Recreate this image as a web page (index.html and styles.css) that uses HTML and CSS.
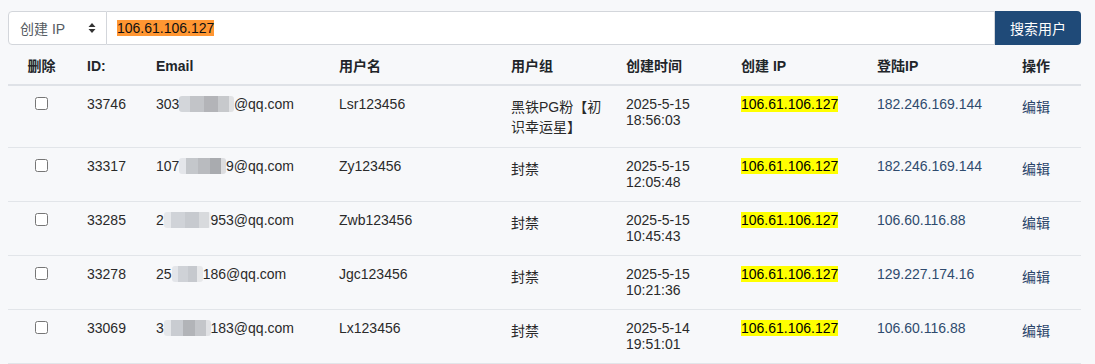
FILE: index.html
```html
<!DOCTYPE html>
<html lang="zh-CN">
<head>
  <meta charset="UTF-8">
  <title>用户管理</title>
  <link rel="stylesheet" href="styles.css">
</head>
<body>
  <div class="search-bar">
    <div class="search-select">
      <span>创建 IP</span>
      <svg class="arrows" width="8" height="12" viewBox="0 0 8 12">
        <path d="M4 1 L7.5 5 H0.5 Z M4 11 L0.5 7 H7.5 Z" fill="#333"/>
      </svg>
    </div>
    <div class="search-field"><span class="hit">106.61.106.127</span></div>
    <button class="search-button">搜索用户</button>
  </div>

  <table class="user-table">
    <colgroup>
      <col style="width:67px">
      <col style="width:69px">
      <col style="width:183px">
      <col style="width:172px">
      <col style="width:115px">
      <col style="width:115px">
      <col style="width:136px">
      <col style="width:145px">
      <col style="width:71px">
    </colgroup>
    <thead>
      <tr>
        <th class="center">删除</th>
        <th>ID:</th>
        <th>Email</th>
        <th>用户名</th>
        <th>用户组</th>
        <th>创建时间</th>
        <th>创建 IP</th>
        <th>登陆IP</th>
        <th>操作</th>
      </tr>
    </thead>
    <tbody>
      <tr>
        <td class="center"><input type="checkbox"></td>
        <td>33746</td>
        <td>303<span class="mask m1">0000000</span>@qq.com</td>
        <td>Lsr123456</td>
        <td>黑铁PG粉【初识幸运星】</td>
        <td>2025-5-15<br>18:56:03</td>
        <td><span class="ip-hit">106.61.106.127</span></td>
        <td class="login-ip">182.246.169.144</td>
        <td><a href="#" class="edit">编辑</a></td>
      </tr>
      <tr>
        <td class="center"><input type="checkbox"></td>
        <td>33317</td>
        <td>107<span class="mask m2">000000</span>9@qq.com</td>
        <td>Zy123456</td>
        <td>封禁</td>
        <td>2025-5-15<br>12:05:48</td>
        <td><span class="ip-hit">106.61.106.127</span></td>
        <td class="login-ip">182.246.169.144</td>
        <td><a href="#" class="edit">编辑</a></td>
      </tr>
      <tr>
        <td class="center"><input type="checkbox"></td>
        <td>33285</td>
        <td>2<span class="mask m3">000000</span>953@qq.com</td>
        <td>Zwb123456</td>
        <td>封禁</td>
        <td>2025-5-15<br>10:45:43</td>
        <td><span class="ip-hit">106.61.106.127</span></td>
        <td class="login-ip">106.60.116.88</td>
        <td><a href="#" class="edit">编辑</a></td>
      </tr>
      <tr>
        <td class="center"><input type="checkbox"></td>
        <td>33278</td>
        <td>25<span class="mask m4">0000</span>186@qq.com</td>
        <td>Jgc123456</td>
        <td>封禁</td>
        <td>2025-5-15<br>10:21:36</td>
        <td><span class="ip-hit">106.61.106.127</span></td>
        <td class="login-ip">129.227.174.16</td>
        <td><a href="#" class="edit">编辑</a></td>
      </tr>
      <tr>
        <td class="center"><input type="checkbox"></td>
        <td>33069</td>
        <td>3<span class="mask m5">000000</span>183@qq.com</td>
        <td>Lx123456</td>
        <td>封禁</td>
        <td>2025-5-14<br>19:51:01</td>
        <td><span class="ip-hit">106.61.106.127</span></td>
        <td class="login-ip">106.60.116.88</td>
        <td><a href="#" class="edit">编辑</a></td>
      </tr>
    </tbody>
  </table>
</body>
</html>
```

FILE: styles.css
```css
* {
  box-sizing: border-box;
}

body {
  margin: 0;
  padding: 11px 14px 0 8px;
  background-color: #f7f8fa;
  font-family: "Liberation Sans", Arial, "Noto Sans CJK SC", sans-serif;
  font-size: 14px;
  color: #212529;
}

/* Search bar */
.search-bar {
  display: flex;
  height: 34px;
}

.search-select {
  width: 99px;
  display: flex;
  align-items: center;
  justify-content: space-between;
  padding: 0 10px 0 11px;
  background-color: #fff;
  border: 1px solid #d3d6db;
  border-radius: 4px 0 0 4px;
  color: #555b62;
}

.arrows {
  display: block;
}

.search-field {
  flex: 1;
  display: flex;
  align-items: center;
  padding-left: 10px;
  background-color: #fff;
  border: 1px solid #d3d6db;
  border-left: none;
  color: #111;
}

.hit {
  background-color: #ff9632;
}

.search-button {
  width: 86px;
  border: none;
  border-radius: 0 4px 4px 0;
  background-color: #1f4a78;
  color: #fff;
  font-family: inherit;
  font-size: 14px;
  cursor: pointer;
}

/* Table */
.user-table {
  width: 100%;
  border-collapse: collapse;
  table-layout: fixed;
}

.user-table th,
.user-table td {
  padding: 10px 12px 11px;
  text-align: left;
  vertical-align: top;
}

.user-table th {
  font-weight: bold;
  padding-bottom: 9px;
  vertical-align: baseline;
  border-bottom: 2px solid #dfe2e7;
}

.user-table td {
  border-bottom: 1px solid #e2e5e9;
  color: #2a2a2a;
}

.user-table .center {
  text-align: center;
}

.user-table input[type="checkbox"] {
  margin: 1px 0 0;
  width: 13px;
  height: 13px;
}

.mask {
  color: transparent;
  border-radius: 3px;
}

.m1 {
  background: linear-gradient(to right, #d3d6da 0 20%, #c2c4c8 20% 45%, #b3b4b8 45% 70%, #c7c9cc 70% 90%, #e1e2e4 90%);
}

.m2 {
  background: linear-gradient(to right, #e4e6ea 0 15%, #c4c7cb 15% 40%, #b9bbbf 40% 65%, #a9abaf 65% 90%, #dcdde0 90%);
}

.m3 {
  background: linear-gradient(to right, #e6e8eb 0 15%, #d0d3d8 15% 45%, #c7cacf 45% 75%, #d8dadd 75% 95%, #eeeff1 95%);
}

.m4 {
  background: linear-gradient(to right, #e3e5e9 0 20%, #cfd2d7 20% 50%, #c6c9ce 50% 80%, #e7e8ea 80%);
}

.m5 {
  background: linear-gradient(to right, #e5e7ea 0 15%, #c9ccd1 15% 40%, #b2b4b8 40% 65%, #c4c6ca 65% 90%, #e1e2e5 90%);
}

.ip-hit {
  background-color: #ffff00;
  color: #000;
}

.user-table .login-ip {
  color: #2f4b6e;
}

.edit {
  color: #2a4469;
  text-decoration: none;
}
```
